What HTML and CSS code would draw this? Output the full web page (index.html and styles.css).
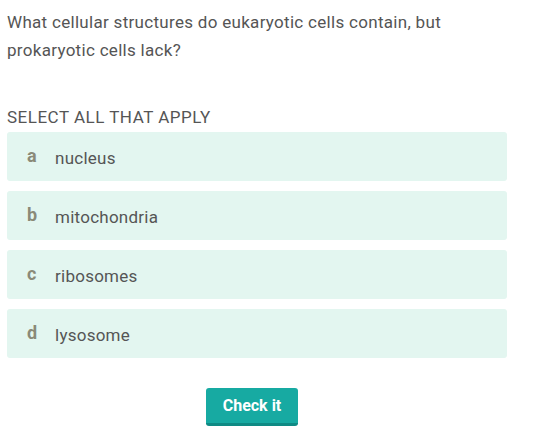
FILE: index.html
```html
<!DOCTYPE html>
<html>
<head>
<meta charset="utf-8">
<link rel="stylesheet" href="styles.css">
</head>
<body>
<div class="quiz">
  <p class="question">What cellular structures do eukaryotic cells contain, but prokaryotic cells lack?</p>
  <div class="instruction">SELECT ALL THAT APPLY</div>
  <ul class="options">
    <li class="option"><span class="letter">a</span><span class="label">nucleus</span></li>
    <li class="option"><span class="letter">b</span><span class="label">mitochondria</span></li>
    <li class="option"><span class="letter">c</span><span class="label">ribosomes</span></li>
    <li class="option"><span class="letter">d</span><span class="label">lysosome</span></li>
  </ul>
  <div class="actions"><button class="check">Check it</button></div>
</div>
</body>
</html>
```
FILE: styles.css
```css
* { box-sizing: border-box; }
body {
  margin: 0;
  background: #fff;
  font-family: Roboto, Lato, "Liberation Sans", sans-serif;
  color: #555;
}
.quiz {
  width: 500px;
  margin-left: 7px;
  padding-top: 8px;
}
.question {
  margin: 0;
  font-size: 17px;
  line-height: 28px;
  letter-spacing: 0.3px;
  color: #555;
}
.instruction {
  margin-top: 41px;
  font-size: 17px;
  line-height: 24px;
  letter-spacing: 0.5px;
  color: #555;
}
.options {
  list-style: none;
  margin: 3px 0 0;
  padding: 0;
  display: flex;
  flex-direction: column;
  gap: 10px;
}
.option {
  height: 49px;
  background: #e3f6f0;
  border-radius: 3px;
  display: flex;
  align-items: center;
  padding-left: 20px;
}
.letter {
  width: 28px;
  font-weight: 700;
  font-size: 18px;
  color: #8a8a78;
  margin-top: -3px;
}
.label {
  font-size: 17px;
  letter-spacing: 0.25px;
  color: #555;
  padding-top: 2px;
}
.actions {
  display: flex;
  justify-content: center;
  margin-top: 30px;
  padding-right: 10px;
}
.check {
  width: 92px;
  height: 38px;
  border: none;
  border-bottom: 3px solid #0f8a84;
  border-radius: 3px;
  background: #17aaa2;
  color: #fff;
  font-family: Roboto, Lato, sans-serif;
  font-weight: 700;
  font-size: 16px;
  padding: 0;
  cursor: pointer;
}
```
